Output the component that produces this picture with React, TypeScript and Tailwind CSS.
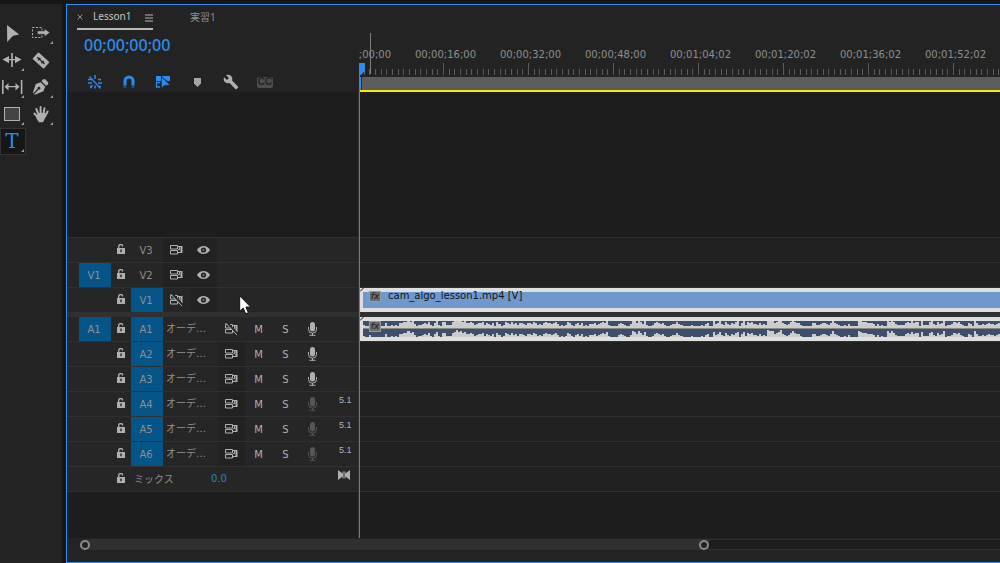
import * as React from "react";
import clsx from "clsx";
import { MdBuild } from "react-icons/md";

const MAJOR_STEP = 85;
const MINOR_PER_MAJOR = 15;

const rulerLabels = [
  "00;00;00;00",
  "00;00;16;00",
  "00;00;32;00",
  "00;00;48;00",
  "00;01;04;02",
  "00;01;20;02",
  "00;01;36;02",
  "00;01;52;02",
];

// one digit per 2px of clip, 0 (silent) to 7 (peak)
const PEAKS = [
  "10020000000300101033446452011232410351044111",
  "457564533431233413213042014324231332133243121",
  "343323420101431023130102231234351000023210026",
  "53642510013432310012",
  "2421000010000102300523521421324503514342213",
  "121766345732124643310000033112332136321001020000",
  "6544333202010064642111134353440511145214236",
  "011243421003206311212322123",
].join("");

const WAVE_WIDTH = PEAKS.length * 2;

type VideoTrack = { name: string; source?: string; target?: boolean; syncOff?: boolean };
type AudioTrack = VideoTrack & { surround?: boolean };

const videoTracks: VideoTrack[] = [
  { name: "V3" },
  { name: "V2", source: "V1" },
  { name: "V1", target: true, syncOff: true },
];

const audioTracks: AudioTrack[] = [
  { name: "A1", source: "A1", target: true, syncOff: true },
  { name: "A2", target: true },
  { name: "A3", target: true },
  { name: "A4", target: true, surround: true },
  { name: "A5", target: true, surround: true },
  { name: "A6", target: true, surround: true },
];

export default function App() {
  return (
    <div className="flex min-h-screen overflow-hidden bg-[#161616] pt-1 font-['DejaVu_Sans','Noto_Sans_CJK_JP',sans-serif] text-[10px] text-[#8f8f8f]">
      <ToolPanel />
      <main className="ml-1 flex min-w-0 flex-1 flex-col border-y border-l border-[#2d8ceb] bg-[#232323]">
        <div className="flex min-h-0 flex-1">
          <div className="flex w-[292px] shrink-0 flex-col">
            <PanelHeader />
            <TrackHeaders />
          </div>
          <TimelineArea />
        </div>
        <ZoomBar />
      </main>
    </div>
  );
}

/* ---------- tools ---------- */

function ToolPanel() {
  return (
    <aside className="grid w-[62px] shrink-0 auto-rows-[27px] grid-cols-[26px_26px] content-start gap-x-[3px] bg-[#232323] pt-4">
      <Tool label="Selection">
        <path d="M7 5 19.2 14.6 13 15.8 7.2 22Z" />
      </Tool>
      <Tool label="Track select forward" more>
        <rect x="3.5" y="7.5" width="9.5" height="10" fill="none" stroke="#b0b0b0" strokeDasharray="2 1.5" />
        <path d="M8.5 11h7V8.8l5.3 3.8-5.3 3.8v-2.2h-7Z" stroke="#232323" strokeWidth=".4" />
      </Tool>
      <Tool label="Ripple edit" more>
        <path d="M11.2 6h1.7v14h-1.7ZM2.5 12.6 9 9v3h6V9l6.5 3.6L15 16.2v-3H9v3Z" />
      </Tool>
      <Tool label="Razor">
        <g transform="rotate(42 12 13.5)">
          <rect x="4.5" y="9" width="15" height="9" rx=".8" />
          <path d="M7 13h2v-1h1.5v1h3v-1H15v1h2v1.3h-2v1h-1.500v-1h-3v1H9v-1H7Z" fill="#232323" />
        </g>
      </Tool>
      <Tool label="Slip" more>
        <path d="M2 6h1.6v14H2ZM20.8 6h1.6v14h-1.6ZM4.5 12.7 8.5 9v3.100h7V9l4 3.700-4 3.700v-3.100h-7v3.100Z" />
      </Tool>
      <Tool label="Pen" more>
        <path d="M13.8 5.5 16 5l3.300 3.600-.3 2-2 1.200-4.500-4.500Z" />
        <path d="m11.7 8.2 4.500 4.600-1.800 4.500-8.600 3.400-.7-.5 4.500-4.800a1.400 1.400 0 1 0-.9-.8l-4.400 4.800-.4-.6L6.800 10Z" />
      </Tool>
      <Tool label="Rectangle" more>
        <rect x="4.5" y="6.5" width="15" height="13" fill="#444" stroke="#b0b0b0" />
      </Tool>
      <Tool label="Hand" more>
        <g fill="none" stroke="#b0b0b0" strokeWidth="2" strokeLinecap="round">
          <path d="m5.4 12.5 3.600 4M7.300 8l2.500 6M11.600 6v7M15.500 7.300 14.300 14M18.600 10.500 16 15.500" />
        </g>
        <path d="M8.500 12h7.800l.5 3-1.800 4.500-1.200 1.800H10L7.200 17Z" />
      </Tool>
      <Tool label="Type" more active>
        <text
          x="12"
          y="20"
          textAnchor="middle"
          fill="#2d8ceb"
          className="font-['DejaVu_Serif',serif] text-[20px]"
        >
          T
        </text>
      </Tool>
    </aside>
  );
}

function Tool({
  label,
  more,
  active,
  children,
}: {
  label: string;
  more?: boolean;
  active?: boolean;
  children: React.ReactNode;
}) {
  return (
    <button
      aria-label={label}
      className={clsx("h-[27px] w-[26px]", active && "bg-[#161616] outline outline-1 -outline-offset-1 outline-[#333]")}
    >
      <svg viewBox="0 0 26 27" className="h-[27px] w-[26px]" fill="#b0b0b0">
        {children}
        {more && <path d="M24 21v3h-3Z" fill="#9a9a9a" />}
      </svg>
    </button>
  );
}

/* ---------- panel header ---------- */

function PanelHeader() {
  return (
    <header className="flex h-[87px] shrink-0 flex-col pl-2.5 font-['Noto_Sans','Noto_Sans_CJK_JP',sans-serif]">
      <div className="flex h-[25px] items-stretch">
        <button className="flex w-[76px] items-center border-b-2 border-[#b8b8b8] text-[#c4c4c4]">
          <svg viewBox="0 0 6 6" className="h-1.5 w-1.5" stroke="#8f8f8f">
            <path d="m.5.5 5 5m0-5-5 5" />
          </svg>
          <span className="ml-2.5 flex-1 text-left">Lesson1</span>
          <svg viewBox="0 0 8 8" className="mt-0.5 h-2 w-2" stroke="#b8b8b8">
            <path d="M0 1h8M0 4h8M0 7h8" />
          </svg>
        </button>
        <button className="ml-[37px]">実習1</button>
      </div>
      <div className="pl-[7px] text-[16px] leading-[30px] font-medium text-[#2d8ceb]">00;00;00;00</div>
      <div className="flex h-8 items-end pb-0.5 pl-px">
        <ToolbarButton label="Insert as nest">
          <g fill="none" stroke="#2d8ceb" strokeWidth="1.5">
            <path d="M8 1v4M1 5.500h4M1 9h4M11 9h4M3 12.500h2M11 5.500h3M5.500 11l-2 3M8 11.500v3M11 12.500h3" />
            <path d="M2.500 2.500l11 12" strokeWidth="1.2" />
          </g>
        </ToolbarButton>
        <ToolbarButton label="Snap">
          <path d="M4 12V7a4 4 0 0 1 8 0v5" fill="none" stroke="#2d8ceb" strokeWidth="3" />
          <path d="M2.500 11h3v3h-3ZM10.500 11h3v3h-3Z" fill="#1d4f85" />
        </ToolbarButton>
        <ToolbarButton label="Linked selection">
          <path d="M1 2h5v5H1ZM7 2h8v5h-2.500L7 3Z" fill="#2d8ceb" />
          <path d="M5 8.500H1.500v4.500H5" fill="none" stroke="#2d8ceb" strokeWidth="1.3" />
          <path d="M6.500 3v11l2.800-2.500L15 11Z" fill="#2d8ceb" stroke="#232323" strokeWidth=".5" />
        </ToolbarButton>
        <ToolbarButton label="Add marker">
          <path d="M5 4h7v5.500L8.500 13 5 9.500Z" fill="#a5a5a5" />
        </ToolbarButton>
        <button aria-label="Timeline settings" className="flex w-[34px] justify-center text-[#b0b0b0]">
          <MdBuild className="h-4 w-4" />
        </button>
        <button aria-label="Captions" className="flex h-4 w-[34px] items-center justify-center">
          <span className="flex h-[11px] w-4 items-center justify-center rounded-xs bg-[#4d4d4d] font-['Liberation_Sans',sans-serif] text-[10px] leading-none font-bold text-[#232323]">
            CC
          </span>
        </button>
      </div>
    </header>
  );
}

function ToolbarButton({ label, children }: { label: string; children: React.ReactNode }) {
  return (
    <button aria-label={label} className="flex w-[34px] justify-center">
      <svg viewBox="0 0 16 16" className="h-4 w-4">
        {children}
      </svg>
    </button>
  );
}

/* ---------- track headers ---------- */

function TrackHeaders() {
  return (
    <div className="flex flex-1 flex-col border-r border-[#303030] bg-[#1d1d1d]">
      <div className="h-[145px]" />
      {videoTracks.map((track) => (
        <div key={track.name} className="relative flex h-[25px] border-t border-[#303030] bg-[#262626]">
          <Patches track={track} />
          <Cell dark={!track.syncOff} label="Sync lock">
            <SyncIcon off={track.syncOff} />
          </Cell>
          <Cell dark label="Toggle track output">
            <EyeIcon />
          </Cell>
          {track.target && <Pointer />}
        </div>
      ))}
      <div className="h-[5px] bg-[#303030]" />
      {audioTracks.map((track, i) => (
        <div
          key={track.name}
          className={clsx("flex bg-[#262626]", i === 0 ? "h-6" : "h-[25px] border-t border-[#303030]")}
        >
          <Patches track={track} />
          <span className="w-[55px] pl-[3px] leading-6 whitespace-nowrap">オーデ…</span>
          <Cell dark={!track.syncOff} label="Sync lock">
            <SyncIcon off={track.syncOff} />
          </Cell>
          <Cell label="Mute">M</Cell>
          <Cell label="Solo">S</Cell>
          <Cell label="Voice-over record">
            <MicIcon dim={track.surround} />
          </Cell>
          {track.surround && (
            <span className="pt-0.5 pl-[13px] font-['Liberation_Sans_Narrow','Liberation_Sans',sans-serif] text-[9px] leading-3 text-[#b0b0b0]">
              5.1
            </span>
          )}
        </div>
      ))}
      <div className="flex h-[26px] border-y border-[#303030] bg-[#262626]">
        <span className="w-11" />
        <LockButton />
        <span className="w-20 pt-px pl-[3px] leading-6">ミックス</span>
        <span className="flex-1 leading-6 text-[#2d7fd0]">0.0</span>
        <button aria-label="Expand mix track" className="mr-2 h-4">
          <svg viewBox="0 0 12 10" className="h-2.5 w-3" fill="#b0b0b0">
            <path d="M0 0 4.500 3.500V1.500h1v7h-1V6.500L0 10ZM12 0 7.500 3.500V1.500h-1v7h1V6.500L12 10Z" />
          </svg>
        </button>
      </div>
    </div>
  );
}

function Patches({ track }: { track: VideoTrack }) {
  return (
    <>
      <button
        aria-label={`Source patch ${track.name}`}
        className={clsx("ml-3 h-6 w-8 pr-0.5", track.source && "bg-[#055588]")}
      >
        {track.source}
      </button>
      <LockButton />
      <button className={clsx("h-6 w-8 pr-0.5", track.target && "bg-[#055588]")}>{track.name}</button>
    </>
  );
}

function LockButton() {
  return (
    <button aria-label="Lock track" className="flex h-6 w-5 items-center justify-center pb-0.5">
      <svg viewBox="0 0 8 10" className="h-2.5 w-2" fill="#b0b0b0">
        <path d="M1.700 5V2.500a2 2 0 0 1 4 0" fill="none" stroke="#b0b0b0" strokeWidth="1.3" />
        <path d="M0 4h8v6H0Zm3.300 1.500v2.800h1.400V5.500Z" fillRule="evenodd" />
      </svg>
    </button>
  );
}

function Cell({ label, dark, children }: { label: string; dark?: boolean; children: React.ReactNode }) {
  return (
    <button
      aria-label={label}
      className={clsx("flex h-6 w-[27px] items-center justify-center text-[#b0b0b0]", dark && "bg-[#222222]")}
    >
      {children}
    </button>
  );
}

function SyncIcon({ off }: { off?: boolean }) {
  return (
    <svg viewBox="0 0 13 12" className="h-3 w-[13px]" fill="none" stroke="#b0b0b0">
      <path d="M.5 1.500h7v3.500h-7ZM.5 6.500h7v3.500h-7Z" />
      <path d="M7.500 2.500h4M7.500 8.500h4M8 5.700h1.500V3" />
      <path d="M11.500 2v7" strokeWidth="2" />
      {off && (
        <>
          <path d="M2-.5l11 12" stroke="#262626" strokeWidth="2" />
          <path d="M.5 0l11.500 12" />
        </>
      )}
    </svg>
  );
}

function EyeIcon() {
  return (
    <svg viewBox="0 0 13 10" className="h-2.5 w-[13px]">
      <path d="M0 5C3-.3 10-.3 13 5c-3 5.300-10 5.300-13 0Z" fill="#b0b0b0" />
      <circle cx="6.5" cy="5" r="2.6" fill="#222" />
      <circle cx="6.5" cy="5" r="1.1" fill="#777" />
    </svg>
  );
}

function MicIcon({ dim }: { dim?: boolean }) {
  const color = dim ? "#565656" : "#b0b0b0";
  return (
    <svg viewBox="0 0 9 14" className="h-3.5 w-[9px]">
      <rect x="2" y="0" width="5" height="9.5" rx="2.5" fill={color} />
      <path d="M.5 5v2.500a4 3.700 0 0 0 8 0V5M4.500 11v2.500M1.500 13.300h6" fill="none" stroke={color} />
    </svg>
  );
}

function Pointer() {
  return (
    <svg viewBox="0 0 13 20" className="absolute top-[7px] left-[172px] h-5 w-[13px]">
      <path d="M.7.8v15.500l3.500-3.200L6.700 18.800l2.700-1.200-2.500-5.500h4.800Z" fill="#fff" stroke="#111" />
    </svg>
  );
}

/* ---------- timeline ---------- */

function TimelineArea() {
  return (
    <section className="relative flex min-w-0 flex-1 flex-col overflow-hidden bg-[#1d1d1d]">
      <Ruler />
      <div className="h-[145px]" />
      <Lane />
      <Lane />
      <Lane>
        <VideoClip />
      </Lane>
      <div className="h-[5px] bg-[#303030]" />
      <div className="flex h-6 bg-[#212121] pl-px">
        <AudioClip />
      </div>
      {audioTracks.slice(1).map((track) => (
        <Lane key={track.name} />
      ))}
      <Lane />
      <div className="h-[47px] border-t border-[#303030]" />
      {/* Playhead */}
      <div className="absolute top-[58px] bottom-0 left-0 w-px bg-[#2d8ceb]" />
      <svg viewBox="0 0 6 12" className="absolute top-[58px] left-0 h-3 w-1.5" fill="#2d8ceb">
        <path d="M0 0h6v8l-4 4H0Z" />
      </svg>
      <div className="absolute top-7 left-[11px] h-[41px] w-px bg-[#808080]" />
    </section>
  );
}

function Ruler() {
  const ticks = Array.from({ length: MINOR_PER_MAJOR * 24 }, (_, i) => i);
  return (
    <div className="h-[87px] shrink-0 bg-[#232323] pt-10">
      <div className="-ml-[29px] flex h-[18px] leading-5 text-[#8f8f8f]">
        {rulerLabels.map((label) => (
          <span key={label} className="w-[85px] shrink-0">
            {label}
          </span>
        ))}
      </div>
      <svg className="h-3 w-full" stroke="#5c5c5c" shapeRendering="crispEdges">
        {ticks.map((i) => {
          const x = Math.round((i * MAJOR_STEP) / MINOR_PER_MAJOR) - 0.5;
          return <line key={i} x1={x} x2={x} y1={i % MINOR_PER_MAJOR ? 6 : 0} y2={12} />;
        })}
      </svg>
      <div className="mt-0.5 ml-px flex h-[15px] border-b-2 border-[#f5ee00]">
        <span className="w-px bg-[#2d8ceb]" />
        <span className="ml-px flex-1 bg-[#5d5d5d]" />
      </div>
    </div>
  );
}

function Lane({ children }: { children?: React.ReactNode }) {
  return <div className="flex h-[25px] border-t border-[#303030] bg-[#212121] pl-px">{children}</div>;
}

function FxBadge() {
  return (
    <span className="flex h-[11px] w-3 items-center justify-center border border-[#9b9b93] bg-[#6b6b6b] text-[9px] leading-none text-[#222] italic">
      fx
    </span>
  );
}

function ClipCorner() {
  return (
    <svg viewBox="0 0 4 4" className="absolute -top-1 -left-[3px] h-1 w-1" stroke="#1d1d1d">
      <path d="M0 3.500 3.500 0" />
    </svg>
  );
}

function VideoClip() {
  return (
    <div className="relative flex-1 border-y-4 border-l-[3px] border-[#dedede] bg-[#6f99cc]">
      <ClipCorner />
      <div className="flex h-2 items-center text-[#141414]">
        <span className="ml-1.5">
          <FxBadge />
        </span>
        <span className="ml-[7px] pb-0.5">cam_algo_lesson1.mp4 [V]</span>
      </div>
    </div>
  );
}

function AudioClip() {
  return (
    <div className="relative flex-1 border-y-4 border-l-[3px] border-[#dedede] bg-[#3d4f6b]">
      <ClipCorner />
      <svg viewBox={`0 0 ${WAVE_WIDTH} 16`} preserveAspectRatio="none" className="h-4 w-full" shapeRendering="crispEdges">
        <rect y="5" width={WAVE_WIDTH} height="2" fill="#cccccc" />
        {PEAKS.split("").map((p, i) => {
          const h = Number(p);
          const top = Math.min(h, 5);
          return (
            <g key={i} fill="#cccccc">
              <rect x={i * 2} y={5 - top} width="2" height={top} />
              <rect x={i * 2} y={16 - h} width="2" height={h} />
            </g>
          );
        })}
        <rect y="7" width={WAVE_WIDTH} height="1" fill="#8a8a84" />
      </svg>
      <span className="absolute top-0 left-1.5">
        <FxBadge />
      </span>
    </div>
  );
}

/* ---------- zoom bar ---------- */

function ZoomBar() {
  return (
    <div className="flex h-6 shrink-0 items-start pl-[13px]">
      <div className="mt-px flex h-[11px] w-[68.4%] items-center justify-between rounded-l-full bg-[#303030]">
        <ZoomHandle label="Zoom start" />
        <ZoomHandle label="Zoom end" />
      </div>
      <div className="mt-px h-[11px] flex-1 border-y border-[#303030] bg-[#1d1d1d]" />
    </div>
  );
}

function ZoomHandle({ label }: { label: string }) {
  return <button aria-label={label} className="h-2.5 w-2.5 rounded-full border-2 border-[#8a8a8a] bg-[#232323]" />;
}
